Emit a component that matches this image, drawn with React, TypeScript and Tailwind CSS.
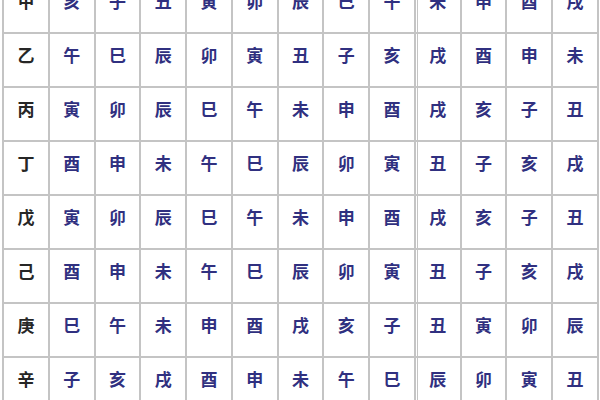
// 天干地支對照表 — 13 欄格線表，頂部與底部被裁切。

const rows: string[][] = [
  ["甲", "亥", "子", "丑", "寅", "卯", "辰", "巳", "午", "未", "申", "酉", "戌"],
  ["乙", "午", "巳", "辰", "卯", "寅", "丑", "子", "亥", "戌", "酉", "申", "未"],
  ["丙", "寅", "卯", "辰", "巳", "午", "未", "申", "酉", "戌", "亥", "子", "丑"],
  ["丁", "酉", "申", "未", "午", "巳", "辰", "卯", "寅", "丑", "子", "亥", "戌"],
  ["戊", "寅", "卯", "辰", "巳", "午", "未", "申", "酉", "戌", "亥", "子", "丑"],
  ["己", "酉", "申", "未", "午", "巳", "辰", "卯", "寅", "丑", "子", "亥", "戌"],
  ["庚", "巳", "午", "未", "申", "酉", "戌", "亥", "子", "丑", "寅", "卯", "辰"],
  ["辛", "子", "亥", "戌", "酉", "申", "未", "午", "巳", "辰", "卯", "寅", "丑"],
];

export default function App() {
  return (
    <div className="h-[400px] w-[600px] overflow-hidden bg-white">
      <div
        className="-mt-[22px] ml-[2px] grid w-[597px] grid-cols-[repeat(13,1fr)] gap-[2px] bg-[#c4c4c4] p-[2px] text-[17px] font-semibold leading-none"
        style={{ fontFamily: '"Noto Sans CJK SC", "Noto Sans CJK TC", sans-serif' }}
      >
        {rows.map((row, r) =>
          row.map((ch, c) => (
            <div
              key={`${r}-${c}`}
              className={
                "flex h-[52px] items-center justify-center bg-white pb-[11px] " +
                (c === 0 ? "text-[#262626]" : "text-[#303080]") +
                (c === 9 ? " shadow-[inset_1px_0_0_#fff,inset_2px_0_0_#c4c4c4]" : "")
              }
            >
              {ch}
            </div>
          )),
        )}
      </div>
    </div>
  );
}
